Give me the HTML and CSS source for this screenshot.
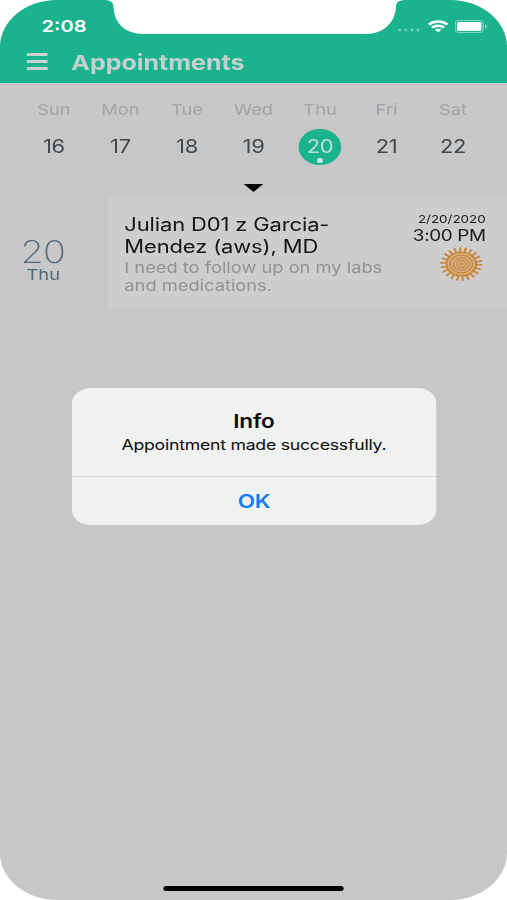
FILE: index.html
```
<!DOCTYPE html>
<html lang="en">
<head>
  <meta charset="UTF-8">
  <title>Appointments</title>
  <link rel="stylesheet" href="styles.css">
</head>
<body>

  <div class="phone">
    <header class="header">
      <div class="status">
        <span class="clock">2:08</span>
        <div class="status-icons">
          <svg class="signal" viewBox="0 0 19 4"><circle cx="2" cy="2" r="1.4"/><circle cx="7" cy="2" r="1.4"/><circle cx="12" cy="2" r="1.4"/><circle cx="17" cy="2" r="1.4"/></svg>
          <svg class="wifi" viewBox="0 0 17 13" preserveAspectRatio="none" fill="none" stroke="#fff" stroke-width="2.5">
            <path d="M.9 4.800C5.200 .500 11.800 .500 16.100 4.800"/>
            <path d="M3.500 8C6.300 5.200 10.700 5.200 13.500 8"/>
            <path d="M5.800 10.200C7.400 8.700 9.600 8.700 11.200 10.200L8.500 13z" fill="#fff" stroke="none"/>
          </svg>
          <svg class="battery" viewBox="0 0 27 13">
            <rect x=".5" y=".5" width="23" height="12" rx="3" fill="none" stroke="#fff" stroke-opacity=".45"/>
            <rect x="2" y="2" width="20" height="9" rx="1.500" fill="#fff"/>
            <path d="M25 4.500c2 .8 2 3.200 0 4z" fill="#fff" fill-opacity=".45"/>
          </svg>
        </div>
      </div>
      <div class="navbar">
        <div class="menu-btn"><i></i><i></i><i></i></div>
        <h1>Appointments</h1>
      </div>
    </header>

    <div class="week">
      <div class="day"><span class="name">Sun</span><span class="num">16</span></div>
      <div class="day"><span class="name">Mon</span><span class="num">17</span></div>
      <div class="day"><span class="name">Tue</span><span class="num">18</span></div>
      <div class="day"><span class="name">Wed</span><span class="num">19</span></div>
      <div class="day"><span class="name">Thu</span><span class="num selected">20</span></div>
      <div class="day"><span class="name">Fri</span><span class="num">21</span></div>
      <div class="day"><span class="name">Sat</span><span class="num">22</span></div>
    </div>
    <div class="knob"></div>

    <div class="agenda">
      <div class="agenda-day">
        <span class="agenda-num">20</span>
        <span class="agenda-name">Thu</span>
      </div>
      <div class="card">
        <div class="info">
          <h2>Julian D01 z Garcia-<br>Mendez (aws), MD</h2>
          <p>I need to follow up on my labs<br>and medications.</p>
        </div>
        <div class="when">
          <span class="date">2/20/2020</span>
          <span class="time">3:00 PM</span>
          <svg class="sun" viewBox="-18 -18 36 36" preserveAspectRatio="none" fill="none" stroke="#cb8436">
            <circle r="15" stroke-width="5.500" stroke-dasharray="1.700 2.584"/>
            <circle r="12.500" fill="#d2ae84" stroke-width="1.700"/>
            <circle r="9.400" stroke-width="1.100"/>
            <circle r="6.600" stroke-width="1.100"/>
            <circle r="3.900" stroke-width="1.100"/>
            <circle r="1.400" stroke-width="1"/>
          </svg>
        </div>
      </div>
    </div>

    <div class="home-bar"></div>

    <div class="alert">
      <div class="alert-body">
        <h3>Info</h3>
        <p>Appointment made successfully.</p>
      </div>
      <div class="alert-btn">OK</div>
    </div>

    <svg class="notch" viewBox="0 0 302 35" preserveAspectRatio="none">
      <path fill="#fff" d="M0 0C7 0 10 2 10 8C11 23 21 34 41 34H262C279 34 291 23 292 8C292 2 295 0 302 0z"/>
    </svg>
  </div>

</body>
</html>
```

FILE: styles.css
```
body {
  margin: 0;
  background: #fff;
  font-family: Inter, "Liberation Sans", sans-serif;
  overflow: hidden;
}

h1, h2, h3, p {
  margin: 0;
}

/* the screen is 416 wide and stretched to fill 507 */
.phone {
  position: relative;
  display: flex;
  flex-direction: column;
  width: 416px;
  height: 900px;
  background: #c7c7c7;
  border-radius: 47px;
  overflow: hidden;
  transform: scaleX(1.21875);
  transform-origin: 0 0;
}

.header {
  height: 82.5px;
  background: #1bb28e;
}

.status {
  display: flex;
  justify-content: space-between;
  height: 41px;
  padding: 0 16.500px 0 34px;
}

.clock {
  padding-top: 16px;
  line-height: 21px;
  font-size: 16.5px;
  font-weight: 600;
  color: #fff;
}

.status-icons {
  display: flex;
  align-items: center;
  height: 53px;
}

.signal {
  width: 19px;
  height: 4px;
  margin: 7px 6px 0 0;
  fill: #fff;
  opacity: .35;
}

.wifi {
  width: 17px;
  height: 12.500px;
  margin-right: 5px;
}

.battery {
  width: 27px;
  height: 13px;
}

.navbar {
  display: flex;
  align-items: center;
  gap: 20px;
  height: 40px;
  padding-left: 21.500px;
}

.menu-btn {
  display: flex;
  flex-direction: column;
  gap: 4px;
  width: 17px;
}

.menu-btn i {
  height: 3px;
  background: #c9d2cf;
}

h1 {
  padding-top: 3px;
  font-size: 20.500px;
  font-weight: 700;
  line-height: 26px;
  color: #c3d1cd;
}

.week {
  display: flex;
  padding: 17px 17px 0;
}

.day {
  flex: 1;
  display: flex;
  flex-direction: column;
  align-items: center;
}

.name {
  font-size: 15px;
  line-height: 20px;
  color: #9fa4a8;
}

.num {
  position: relative;
  width: 35.500px;
  margin-top: 9px;
  line-height: 36px;
  font-size: 18px;
  letter-spacing: -.2px;
  text-align: center;
  color: #41484e;
}

.num.selected {
  border-radius: 50%;
  background: #1bb28e;
  color: #bfdcd3;
}

.num.selected::after {
  content: "";
  position: absolute;
  left: 15.500px;
  bottom: 1.500px;
  width: 4.500px;
  height: 5px;
  border-radius: 50%;
  background: #d3e3de;
}

.knob {
  align-self: center;
  margin-top: 19.500px;
  border: 8px solid transparent;
  border-top-color: #000;
  border-bottom: 0;
}

.agenda {
  display: flex;
  margin-top: 5px;
}

.agenda-day {
  display: flex;
  flex-direction: column;
  align-items: center;
  width: 71px;
  margin-right: 17.500px;
  padding-top: 36px;
  color: #4f6b79;
}

.agenda-num {
  margin-right: 1px;
  font-size: 31px;
  font-weight: 200;
  line-height: 37px;
  letter-spacing: -.7px;
}

.agenda-name {
  font-size: 15px;
  line-height: 18px;
  margin-top: -4px;
}

.card {
  flex: 1;
  display: flex;
  justify-content: space-between;
  height: 111px;
  background: #cdcdcd;
}

.info {
  padding: 16.500px 0 0 13.500px;
}

h2 {
  font-size: 18px;
  font-weight: 400;
  line-height: 22px;
  letter-spacing: -.1px;
  color: #151515;
  white-space: nowrap;
}

.info p {
  padding-top: 1px;
  font-size: 15px;
  line-height: 18.700px;
  color: #929292;
  white-space: nowrap;
}

.when {
  display: flex;
  flex-direction: column;
  align-items: flex-end;
  padding: 15px 17.500px 0 0;
  color: #1c1c1c;
}

.date {
  font-size: 11px;
  line-height: 15px;
}

.time {
  font-size: 15.500px;
  line-height: 18px;
  letter-spacing: -.3px;
}

.sun {
  width: 35px;
  height: 34px;
  margin: 2px 3px 0 0;
}

.home-bar {
  align-self: center;
  width: 148px;
  height: 5.500px;
  margin: auto 0 9px;
  border-radius: 3px;
  background: #000;
}

.alert {
  position: absolute;
  left: 59px;
  top: 387.500px;
  width: 298.700px;
  height: 137.500px;
  border-radius: 15.500px;
  background: #f0f1f1;
  text-align: center;
}

.alert-body {
  height: 89px;
  padding-top: 21px;
  box-sizing: border-box;
  border-bottom: 1px solid #d5d6d6;
  color: #0c0c0c;
}

h3 {
  font-size: 18.500px;
  font-weight: 600;
  line-height: 25px;
  letter-spacing: -.1px;
}

.alert-body p {
  padding-top: 1px;
  font-size: 14.500px;
  line-height: 20px;
  letter-spacing: -.2px;
}

.alert-btn {
  line-height: 48px;
  font-size: 18.500px;
  font-weight: 600;
  letter-spacing: -.3px;
  color: #187af2;
}

.notch {
  position: absolute;
  left: 84.500px;
  top: 0;
  width: 248px;
  height: 35px;
}
```
